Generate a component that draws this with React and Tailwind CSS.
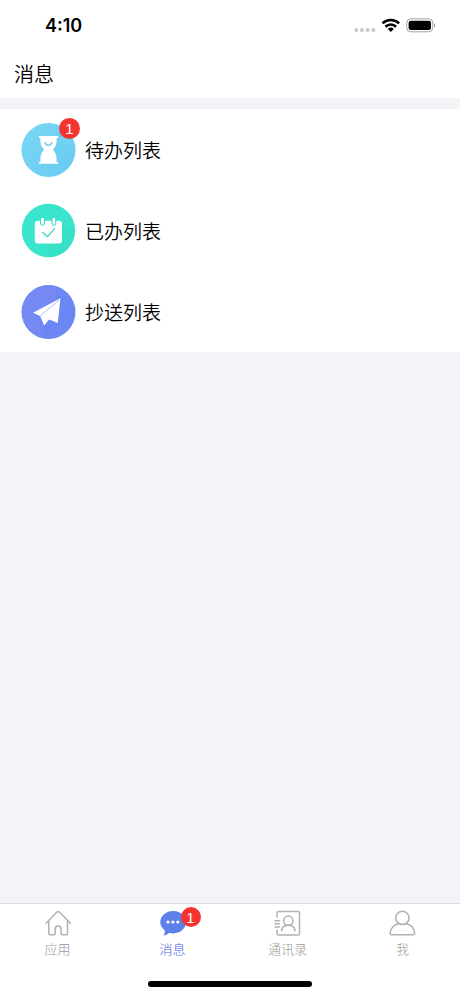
import React from 'react'

function StatusBar() {
  return (
    <div className="flex h-[50px] items-center justify-between pl-[45px] pr-[24px]">
      <span className="pt-[2px] font-['Inter'] text-[18px] font-semibold leading-none text-black">4:10</span>
      <svg width="82" height="20" viewBox="0 0 82 20" className="mt-px">
        <g fill="#c9c9c9">
          <circle cx="2.3" cy="14" r="2" />
          <circle cx="8" cy="14" r="2" />
          <circle cx="13.7" cy="14" r="2" />
          <circle cx="19.3" cy="14" r="2" />
        </g>
        <g fill="none" stroke="#000" strokeWidth="2.6">
          <path d="M28.5 7.4a12 12 0 0 1 16.6 0" />
          <path d="M31.5 10.7a7.6 7.6 0 0 1 10.6 0" />
        </g>
        <path d="M33.8 13a4.4 4.4 0 0 1 6 0l-3 3z" fill="#000" />
        <rect x="52.8" y="2.8" width="26" height="13" rx="4" fill="none" stroke="#a3a3a3" />
        <rect x="54.6" y="4.7" width="22.4" height="9.2" rx="2.2" fill="#000" />
        <path d="M80 7.2c1.8.6 1.8 3.6 0 4.2z" fill="#a3a3a3" />
      </svg>
    </div>
  )
}

function Badge({ count, className }) {
  return (
    <span className={`absolute flex items-center justify-center rounded-full bg-[#f5342f] font-['Liberation_Sans',sans-serif] text-[15px] leading-none text-white ${className}`}>
      {count}
    </span>
  )
}

function HourglassIcon() {
  return (
    <svg width="54" height="54" viewBox="0.5 0 54 54" className="overflow-visible">
      <defs>
        <linearGradient id="todo" x1="0" y1="0" x2="1" y2="1">
          <stop offset="0" stopColor="#79d6f4" />
          <stop offset="1" stopColor="#6bcdf2" />
        </linearGradient>
      </defs>
      <circle cx="27" cy="27" r="27" fill="url(#todo)" />
      <path d="M36 15L53 31A27 27 0 0 1 37 52L18 41z" fill="#5dc2ec" opacity=".15" />
      <path
        d="M17.3 12.9H36.7v1.6L35 15.5c.3 4.2-.2 7.700-3 10.300q-.8.900 0 1.800c2.800 2.600 3.300 6.300 3 10.900l1.700 1v1.200H17.300v-1.200l1.700-1c-.3-4.600.2-8.300 3-10.900q.8-.900 0-1.800c-2.800-2.600-3.300-6.100-3-10.300l-1.700-1z"
        fill="#fff"
      />
      <path d="M23.6 19.7c1 3.4 5.500 3.400 6.700 0" fill="none" stroke="#68c9ef" strokeWidth="1.4" strokeLinecap="round" />
    </svg>
  )
}

function CalendarIcon() {
  return (
    <svg width="54" height="54" viewBox="0.2 0.5 54 54" className="overflow-visible">
      <circle cx="26.7" cy="27" r="26.700" fill="#3be5cd" />
      <path d="M26 40V53.7A26.700 26.700 0 0 0 53 24L40 21V37z" fill="#2fd9c0" opacity=".35" />
      <rect x="13" y="17.300" width="27.200" height="22.800" rx="3" fill="#fff" />
      <g fill="#fff" stroke="#36dfc7" strokeWidth="1.1">
        <rect x="18.8" y="13.8" width="3.8" height="8" rx="1.9" />
        <rect x="30.2" y="13.8" width="3.8" height="8" rx="1.9" />
      </g>
      <path d="M20.5 28.6l5.200 4.700 7.300-8.700" fill="none" stroke="#36d9c4" strokeWidth="1.3" />
    </svg>
  )
}

function PlaneIcon() {
  return (
    <svg width="54" height="54" viewBox="0.5 0 54 54" className="overflow-visible">
      <circle cx="27" cy="27" r="27" fill="#6b87f3" />
      <path d="M35 1.200V18L12 27L16 34L23 40L18 52.400A27 27 0 0 1 35 1.200z" fill="#8289f5" opacity=".5" />
      <path d="M38.900 13.300L11.500 27.800l7.100 3.200 4.100 9.400 4.900-6 8.700 3.600z" fill="#fff" />
      <path d="M37.5 15L18.700 30.800" fill="none" stroke="#9aaaf6" strokeWidth=".8" />
    </svg>
  )
}

const rows = [
  { label: '待办列表', Icon: HourglassIcon, badge: 1 },
  { label: '已办列表', Icon: CalendarIcon },
  { label: '抄送列表', Icon: PlaneIcon },
]

function HomeIcon() {
  return (
    <svg width="30" height="28" viewBox="0 0 30 28" fill="none" stroke="#b1b1b1" strokeWidth="1.5" strokeLinejoin="round" strokeLinecap="round">
      <path d="M3 14.2L13.700 3.300q1.500-1.300 3 0L27.400 14.200" />
      <path d="M5.800 12V24.500q0 1.300 1.300 1.300H11q1.200 0 1.200-1.200V20a2.900 2.900 0 0 1 5.800 0v4.600q0 1.200 1.200 1.200h4q1.300 0 1.300-1.300V12" />
    </svg>
  )
}

function ChatIcon() {
  return (
    <svg width="30" height="28" viewBox="0 0 30 28">
      <path d="M15.200 1.900c7.200 0 12.900 4.900 12.900 11.200s-5.700 11.300-12.900 11.300c-1.500 0-2.800-.2-4-.6-1.500 1.500-3.300 2.500-5.600 2.700.9-1.300 1.400-3 1.300-4.900-2.900-2-4.600-5-4.600-8.500 0-6.300 5.700-11.200 12.900-11.200z" fill="#5d80ea" />
      <g fill="#fff">
        <circle cx="10" cy="13" r="1.6" />
        <circle cx="14.900" cy="13" r="1.6" />
        <circle cx="19.800" cy="13" r="1.6" />
      </g>
    </svg>
  )
}

function ContactsIcon() {
  return (
    <svg width="30" height="28" viewBox="0.5 0 30 28" fill="none" stroke="#b1b1b1" strokeWidth="1.5" strokeLinecap="round">
      <path d="M4.500 8V4q0-1.500 1.500-1.500H25.500q1.500 0 1.500 1.500V24.500q0 1.500-1.500 1.500H6q-1.500 0-1.500-1.500V21" />
      <path d="M2.500 11.700H7M2.500 14.800H7M2.500 17.900H7" />
      <circle cx="15.800" cy="11.700" r="4.600" />
      <path d="M9 21.600c.5-3.200 3.300-5.300 6.800-5.300s6.300 2.100 6.800 5.300" />
    </svg>
  )
}

function UserIcon() {
  return (
    <svg width="30" height="28" viewBox="0.4 0 30 28" fill="none" stroke="#b1b1b1" strokeWidth="1.5" strokeLinejoin="round">
      <circle cx="14.800" cy="8.900" r="6.700" />
      <path d="M11.300 14.600C6 16 3 19.600 2.500 24q-.2 1.800 1.500 1.800H25.600q1.700 0 1.500-1.800C26.600 19.600 23.600 16 18.300 14.600" />
    </svg>
  )
}

const tabs = [
  { label: '应用', Icon: HomeIcon },
  { label: '消息', Icon: ChatIcon, active: true, badge: 1 },
  { label: '通讯录', Icon: ContactsIcon },
  { label: '我', Icon: UserIcon },
]

export default function App() {
  return (
    <div className="flex h-[996px] w-[460px] flex-col bg-[#f2f4f7] font-['Noto_Sans_CJK_SC',sans-serif] text-black">
      <header className="h-[98px] bg-white">
        <StatusBar />
        <h1 className="flex h-12 items-center pl-[14px] text-[20px] font-[350] leading-none">消息</h1>
      </header>

      <main className="mt-[11px] flex-1">
        <ul className="bg-white">
          {rows.map(({ label, Icon, badge }) => (
            <li key={label} className="flex h-[81px] items-center gap-[9px] pl-[22px]">
              <div className="relative">
                <Icon />
                {badge && <Badge count={badge} className="-top-[5px] left-[37px] size-[21px]" />}
              </div>
              <span className="text-[19px] font-[350] leading-none">{label}</span>
            </li>
          ))}
        </ul>
      </main>

      <footer className="h-[93px] border-t border-[#d9dbdd] bg-white">
        <nav className="grid grid-cols-4">
          {tabs.map(({ label, Icon, active, badge }) => (
            <div key={label} className="flex flex-col items-center pt-[5px]">
              <div className="relative">
                <Icon />
                {badge && <Badge count={badge} className="-top-[2px] left-[23px] size-[20px]" />}
              </div>
              <span className={`mt-[5px] text-[13px] font-light leading-none ${active ? 'text-[#4a66e0]' : 'text-[#9b9b9b]'}`}>{label}</span>
            </div>
          ))}
        </nav>
        <div className="mx-auto mt-[26px] h-[6px] w-[164px] rounded-full bg-black" />
      </footer>
    </div>
  )
}
